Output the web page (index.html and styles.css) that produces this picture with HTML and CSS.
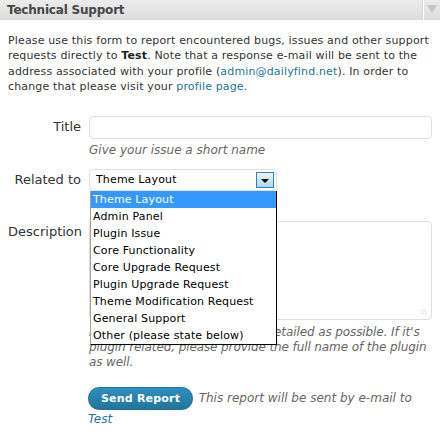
FILE: index.html
```html
<!DOCTYPE html>
<html lang="en">
<head>
    <meta charset="UTF-8">
    <title>Technical Support</title>
    <link rel="stylesheet" href="styles.css">
</head>
<body>
    <div class="widget">
        <div class="widget-head">
            <h3>Technical Support</h3>
            <div class="handle"><span class="arrow"></span></div>
        </div>

        <div class="widget-body">
            <p class="intro">Please use this form to report encountered bugs, issues and other support requests directly to <strong>Test</strong>. Note that a response e-mail will be sent to the address associated with your profile (<a href="#">admin@dailyfind.net</a>). In order to change that please visit your <a href="#">profile page</a>.</p>

            <div class="field">
                <label class="field-label" for="title">Title</label>
                <div class="field-input">
                    <input type="text" id="title" class="text-input">
                    <span class="hint">Give your issue a short name</span>
                </div>
            </div>

            <div class="field field-select">
                <label class="field-label">Related to</label>
                <div class="field-input">
                    <div class="select-wrap">
                        <div class="select">
                            <span class="select-value">Theme Layout</span>
                            <span class="select-btn"><span class="caret"></span></span>
                        </div>
                        <!-- lista desplegada -->
                        <ul class="dropdown">
                            <li class="selected">Theme Layout</li>
                            <li>Admin Panel</li>
                            <li>Plugin Issue</li>
                            <li>Core Functionality</li>
                            <li>Core Upgrade Request</li>
                            <li>Plugin Upgrade Request</li>
                            <li>Theme Modification Request</li>
                            <li>General Support</li>
                            <li>Other (please state below)</li>
                        </ul>
                    </div>
                </div>
            </div>

            <div class="field">
                <label class="field-label" for="desc">Description</label>
                <div class="field-input">
                    <div class="textarea">
                        <span class="grip"></span>
                    </div>
                    <span class="hint hint-desc">Please describe your issue as detailed as possible. If it's plugin related, please provide the full name of the plugin as well.</span>
                </div>
            </div>

            <div class="submit-row">
                <button class="button-primary">Send Report</button>
                <span class="hint">This report will be sent by e-mail to <a href="#">Test</a></span>
            </div>
        </div>
    </div>
</body>
</html>
```

FILE: styles.css
```css
body {
    margin: 0;
    font-family: "DejaVu Sans", Verdana, sans-serif;
    font-size: 11px;
    color: #333;
    background: #fff;
}

a {
    color: #21759b;
    text-decoration: none;
}

.widget-head {
    display: flex;
    height: 20px;
    background: linear-gradient(#ececec, #dcdcdc);
}
.widget-head h3 {
    flex: 1;
    margin: 0;
    padding: 0 7px;
    font-size: 12px;
    letter-spacing: -0.2px;
    line-height: 20px;
    color: #464646;
}
.handle {
    width: 16px;
    border-left: 1px solid #fff;
    box-shadow: -1px 0 0 #d5d5d5;
    display: flex;
    justify-content: center;
    padding-top: 5px;
}
.arrow {
    width: 0;
    height: 0;
    border-left: 5px solid transparent;
    border-right: 5px solid transparent;
    border-top: 8px solid #c4c4c4;
}

.widget-body {
    padding: 13px 4px 10px 8px;
}

.intro {
    margin: 0 0 21px 0;
    line-height: 1.4em;
    letter-spacing: 0.15px;
}
.intro strong {
    color: #222;
}

.field {
    display: flex;
    margin-bottom: 11px;
}
.field-select {
    margin-bottom: 30px;
}
.field-label {
    width: 73px;
    padding-right: 8px;
    text-align: right;
    font-size: 13px;
    line-height: 22px;
}
.field-input {
    flex: 1;
    display: flex;
    flex-direction: column;
    margin-right: 4px;
}

.text-input {
    box-sizing: border-box;
    width: 100%;
    height: 23px;
    margin: 0;
    border: 1px solid #dfdfdf;
    border-radius: 4px;
    background: #fff;
}

.hint {
    color: #666;
    font-style: italic;
    font-size: 12px;
    line-height: 15px;
    margin-top: 4px;
}
.hint-desc {
    margin: 5px -4px 0 0;
    letter-spacing: -0.1px;
}

.select-wrap {
    position: relative;
    width: 188px;
}
.select {
    box-sizing: border-box;
    height: 22px;
    border: 1px solid #dfdfdf;
    border-radius: 4px;
    display: flex;
    align-items: center;
    justify-content: space-between;
    padding: 0 2px 0 6px;
    color: #000;
    letter-spacing: 0.15px;
}
.select-btn {
    box-sizing: border-box;
    width: 18px;
    height: 16px;
    border: 1px solid #3c7fb1;
    background: linear-gradient(#eaf6fd, #a7d9f5);
    display: flex;
    align-items: center;
    justify-content: center;
}
.caret {
    width: 0;
    height: 0;
    border-left: 4px solid transparent;
    border-right: 4px solid transparent;
    border-top: 4px solid #000;
    margin-top: 2px;
}

.dropdown {
    position: absolute;
    top: 22px;
    left: 1px;
    width: 185px;
    margin: 0;
    padding: 0;
    list-style: none;
    background: #fff;
    color: #000;
    border: 1px solid #000;
    border-left-color: #a0a0a0;
    border-top: none;
    z-index: 2;
}
.dropdown li {
    height: 17px;
    line-height: 17px;
    padding-left: 2px;
    font-size: 11px;
    letter-spacing: 0.15px;
}
.dropdown li.selected {
    background: #3399ff;
    color: #fff;
}

.textarea {
    position: relative;
    box-sizing: border-box;
    height: 99px;
    border: 1px solid #dfdfdf;
    border-radius: 4px;
}
.grip {
    position: absolute;
    right: 3px;
    bottom: 3px;
    width: 7px;
    height: 7px;
    background:
        radial-gradient(circle, #bbb 0.8px, transparent 1px) 0 0 / 3px 3px;
}

.submit-row {
    margin: 17px 0 0 80px;
    line-height: 20px;
}
.button-primary {
    height: 23px;
    padding: 0 12px;
    border: 1px solid #21759b;
    border-radius: 11px;
    background: linear-gradient(#2e8fbf, #21759b);
    color: #fff;
    font-family: "DejaVu Sans", Verdana, sans-serif;
    font-size: 11px;
    font-weight: bold;
    letter-spacing: 0.2px;
    cursor: pointer;
}
.submit-row .hint {
    margin-left: 2px;
}
```
